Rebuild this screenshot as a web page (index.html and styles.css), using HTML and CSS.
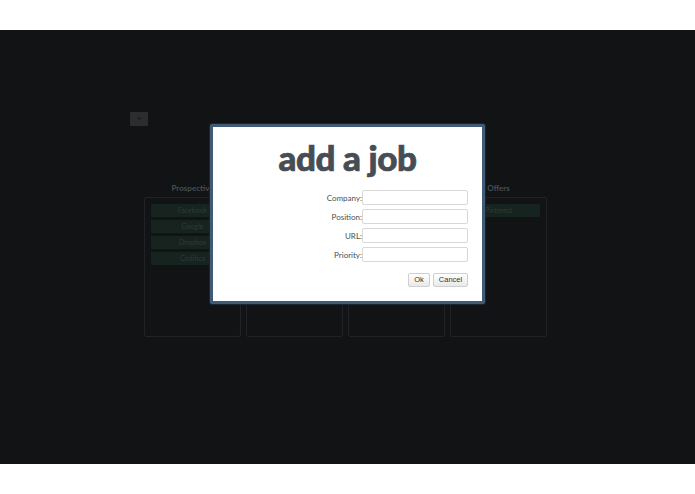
FILE: index.html
```html
<!DOCTYPE html>
<html>
<head>
<meta charset="utf-8">
<link rel="stylesheet" href="styles.css">
</head>
<body>
<div class="band"></div>
<div class="screen">
  <div class="app">
    <button class="add-btn">+</button>
    <div class="board">
      <div class="lane">
        <div class="lane-title">Prospective</div>
        <div class="lane-box">
          <div class="card">Facebook</div>
          <div class="card">Google</div>
          <div class="card">Dropbox</div>
          <div class="card">Codifica</div>
        </div>
      </div>
      <div class="lane">
        <div class="lane-title">Applied</div>
        <div class="lane-box"></div>
      </div>
      <div class="lane">
        <div class="lane-title">Interviews</div>
        <div class="lane-box"></div>
      </div>
      <div class="lane">
        <div class="lane-title">Offers</div>
        <div class="lane-box">
          <div class="card">Pinterest</div>
        </div>
      </div>
    </div>
  </div>
  <div class="modal">
    <h1 class="modal-title">add a job</h1>
    <form class="job-form">
      <label class="field-label">Company:</label><input class="field-input" type="text">
      <label class="field-label">Position:</label><input class="field-input" type="text">
      <label class="field-label">URL:</label><input class="field-input" type="text">
      <label class="field-label">Priority:</label><input class="field-input" type="text">
    </form>
    <div class="actions">
      <button class="btn btn-ok" type="button">Ok</button>
      <button class="btn btn-cancel" type="button">Cancel</button>
    </div>
  </div>
</div>
<div class="band"></div>
</body>
</html>
```

FILE: styles.css
```css
html, body {
  margin: 0;
  padding: 0;
  background: #ffffff;
  font-family: "Lato", "Liberation Sans", sans-serif;
}

.band {
  height: 30px;
  background: #ffffff;
}

.screen {
  position: relative;
  height: 434px;
  background: #111315;
  overflow: hidden;
}

.app {
  padding: 82px 0 0 130px;
}

.add-btn {
  display: block;
  width: 18px;
  height: 14px;
  padding: 0;
  margin: 0;
  border: 0;
  border-radius: 1px;
  background: #2c2d2f;
  color: #0d0d0d;
  font: 8px/14px "Liberation Sans", sans-serif;
}

.board {
  display: flex;
  gap: 5px;
  margin: 57px 0 0 14px;
}

.lane {
  width: 97px;
}

.lane-title {
  height: 14px;
  font-size: 8px;
  font-weight: 700;
  line-height: 10px;
  color: #4a4d51;
  text-align: center;
}

.lane-box {
  box-sizing: border-box;
  height: 140px;
  border: 1px solid #202225;
  border-radius: 2px;
  padding: 6px;
  display: flex;
  flex-direction: column;
  gap: 3px;
}

.card {
  height: 13px;
  background: #17231f;
  border-radius: 1px;
  color: #2c3d37;
  font-size: 7px;
  line-height: 13px;
  text-align: center;
}

.modal {
  position: absolute;
  left: 210px;
  top: 94px;
  width: 269px;
  height: 174px;
  background: #ffffff;
  border: 3px solid #415b77;
  border-radius: 2px;
  box-shadow: 0 0 0 1px #1b2634;
}

.modal-title {
  margin: 11px 0 0;
  height: 52px;
  font-family: "Lato", sans-serif;
  font-weight: 900;
  font-size: 35px;
  line-height: 38px;
  color: #474d55;
  text-align: center;
  letter-spacing: -0.4px;
  -webkit-text-stroke: 0.7px #474d55;
}

.job-form {
  display: grid;
  grid-template-columns: auto 106px;
  justify-content: end;
  align-items: center;
  row-gap: 4px;
  padding-right: 14px;
}

.field-label {
  font-size: 8px;
  color: #4b4f54;
  text-align: right;
}

.field-input {
  box-sizing: border-box;
  width: 106px;
  height: 15px;
  margin: 0;
  padding: 0 2px;
  border: 1px solid #d8d8d8;
  border-radius: 2px;
  background: #ffffff;
  outline: none;
}

.actions {
  display: flex;
  justify-content: flex-end;
  gap: 3px;
  padding: 11px 14px 0 0;
}

.btn {
  box-sizing: border-box;
  height: 14px;
  padding: 0;
  margin: 0;
  border: 1px solid #cfcfcf;
  border-radius: 2px;
  background: linear-gradient(#ffffff, #e9e9e9);
  color: #333333;
  font: 7.5px/12px "Liberation Sans", sans-serif;
  text-align: center;
}

.btn-ok {
  width: 22px;
}

.btn-cancel {
  width: 35px;
}
```
